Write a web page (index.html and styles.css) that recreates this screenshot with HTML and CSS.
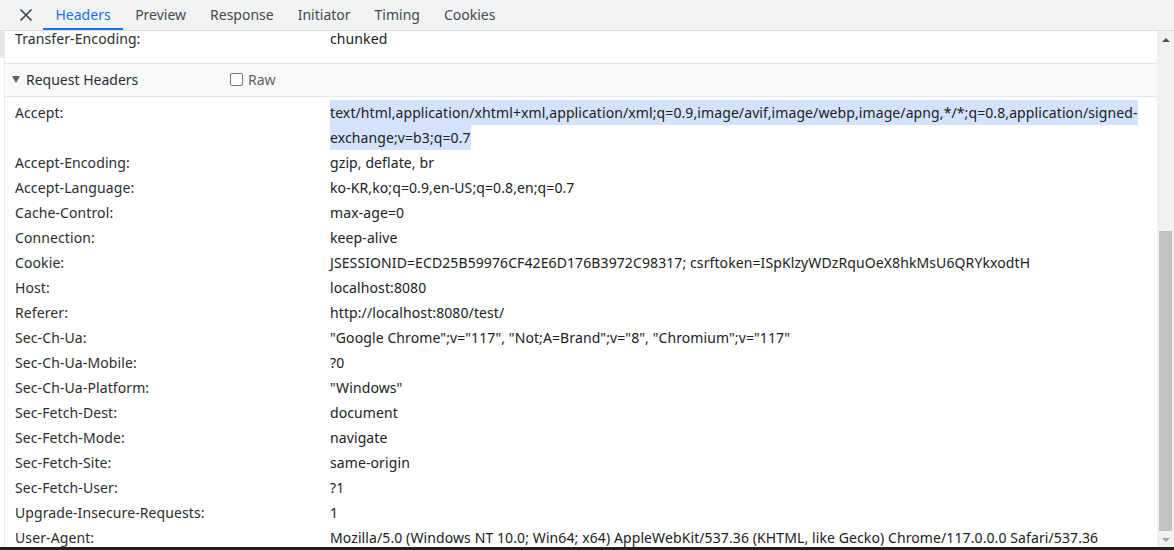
FILE: index.html
```html
<!DOCTYPE html>
<html>
<head>
<meta charset="utf-8">
<link rel="stylesheet" href="styles.css">
</head>
<body>
<div class="app">
  <div class="tabbar">
    <div class="close">
      <svg width="16" height="16" viewBox="0 0 16 16"><path d="M2.5 2.5 L13.5 13.5 M13.5 2.5 L2.5 13.5" stroke="#3c4043" stroke-width="1.6" fill="none"/></svg>
    </div>
    <div class="tab active">Headers</div>
    <div class="tab">Preview</div>
    <div class="tab">Response</div>
    <div class="tab">Initiator</div>
    <div class="tab">Timing</div>
    <div class="tab">Cookies</div>
  </div>
  <div class="main">
    <div class="gutter"><div class="gutter-block"></div></div>
    <div class="content">
      <div class="rows first">
        <div class="name">Transfer-Encoding:</div><div class="value">chunked</div>
      </div>
      <div class="section-head">
        <span class="tri"></span>
        <span class="sec-title">Request Headers</span>
        <span class="raw"><span class="checkbox"></span>Raw</span>
      </div>
      <div class="rows">
        <div class="name">Accept:</div><div class="value"><span class="sel">text/html,application/xhtml+xml,application/xml;q=0.9,image/avif,image/webp,image/apng,*/*;q=0.8,application/signed-<br>exchange;v=b3;q=0.7</span></div>
        <div class="name">Accept-Encoding:</div><div class="value">gzip, deflate, br</div>
        <div class="name">Accept-Language:</div><div class="value">ko-KR,ko;q=0.9,en-US;q=0.8,en;q=0.7</div>
        <div class="name">Cache-Control:</div><div class="value">max-age=0</div>
        <div class="name">Connection:</div><div class="value">keep-alive</div>
        <div class="name">Cookie:</div><div class="value">JSESSIONID=ECD25B59976CF42E6D176B3972C98317; csrftoken=ISpKlzyWDzRquOeX8hkMsU6QRYkxodtH</div>
        <div class="name">Host:</div><div class="value">localhost:8080</div>
        <div class="name">Referer:</div><div class="value">http://localhost:8080/test/</div>
        <div class="name">Sec-Ch-Ua:</div><div class="value">"Google Chrome";v="117", "Not;A=Brand";v="8", "Chromium";v="117"</div>
        <div class="name">Sec-Ch-Ua-Mobile:</div><div class="value">?0</div>
        <div class="name">Sec-Ch-Ua-Platform:</div><div class="value">"Windows"</div>
        <div class="name">Sec-Fetch-Dest:</div><div class="value">document</div>
        <div class="name">Sec-Fetch-Mode:</div><div class="value">navigate</div>
        <div class="name">Sec-Fetch-Site:</div><div class="value">same-origin</div>
        <div class="name">Sec-Fetch-User:</div><div class="value">?1</div>
        <div class="name">Upgrade-Insecure-Requests:</div><div class="value">1</div>
        <div class="name">User-Agent:</div><div class="value">Mozilla/5.0 (Windows NT 10.0; Win64; x64) AppleWebKit/537.36 (KHTML, like Gecko) Chrome/117.0.0.0 Safari/537.36</div>
      </div>
    </div>
    <div class="scrollbar">
      <div class="arrow up"></div>
      <div class="track"><div class="thumb"></div></div>
      <div class="arrow down"></div>
    </div>
  </div>
  <div class="bottombar"></div>
</div>
</body>
</html>
```
FILE: styles.css
```css
* { box-sizing: border-box; }
html, body { margin: 0; padding: 0; }
body {
  font-family: "Noto Sans", "Open Sans", sans-serif;
  font-size: 14px;
  color: #202124;
  background: #fff;
  width: 1174px;
  height: 550px;
  overflow: hidden;
}
.app { display: flex; flex-direction: column; height: 550px; }
.tabbar {
  height: 31px;
  flex: none;
  display: flex;
  align-items: stretch;
  background: #f1f3f4;
  border-bottom: 1px solid #dadce0;
}
.close {
  width: 43px;
  display: flex;
  align-items: center;
  justify-content: center;
  padding-left: 9px;
  padding-bottom: 1px;
}
.tab {
  padding: 0 12px;
  display: flex;
  align-items: center;
  font-size: 14px;
  color: #474a4f;
  padding-bottom: 1px;
}
.tab.active {
  color: #1a73e8;
  border-bottom: 2px solid #1a73e8;
  padding-bottom: 0;
  padding-left: 12.5px;
  padding-right: 12.5px;
}
.main { flex: 1; display: flex; min-height: 0; }
.gutter { width: 4px; flex: none; }
.gutter-block { height: 27px; background: #e8e8e8; }
.content {
  flex: 1;
  overflow: hidden;
  border-left: 1px solid #ececec;
  min-width: 0;
}
.rows {
  display: grid;
  grid-template-columns: 325px 825px;
  line-height: 25px;
  padding: 3px 0 0 0;
  letter-spacing: 0.1px;
}
.rows.first { line-height: 15px; padding: 0 0 17px 0; }
.name { padding-left: 10px; color: #2b2d30; white-space: nowrap; }
.value { color: #202124; }
.sel {
  background: #d3e3fd;
  padding: 3px 0;
  -webkit-box-decoration-break: clone;
  box-decoration-break: clone;
}
.section-head {
  height: 34px;
  display: flex;
  align-items: center;
  background: #f8f9fb;
  border-top: 1px solid #e3e6ee;
  border-bottom: 1px solid #e3e6ee;
  padding-left: 7px;
  padding-bottom: 1px;
}
.tri {
  width: 0; height: 0;
  border-left: 4px solid transparent;
  border-right: 4px solid transparent;
  border-top: 7px solid #5f6368;
  margin-right: 6px;
}
.sec-title { width: 204px; color: #2b2d30; }
.raw { display: flex; align-items: center; color: #5f6368; }
.checkbox {
  width: 13px; height: 13px;
  border: 1px solid #767676;
  border-radius: 2px;
  margin-right: 5px;
  background: #fff;
}
.scrollbar {
  width: 17px;
  flex: none;
  background: #f1f1f1;
  display: flex;
  flex-direction: column;
}
.arrow { height: 17px; flex: none; display: flex; align-items: center; justify-content: center; }
.arrow.up::before {
  content: ""; width: 0; height: 0;
  border-left: 4px solid transparent; border-right: 4px solid transparent;
  border-bottom: 4px solid #505050;
}
.arrow.down::before {
  content: ""; width: 0; height: 0;
  border-left: 4px solid transparent; border-right: 4px solid transparent;
  border-top: 4px solid #a3a3a3;
}
.track { flex: 1; padding: 183px 2px 0 2px; }
.thumb { height: 300px; background: #c1c1c1; }
.bottombar { height: 3px; flex: none; background: #1f1f1f; }
```
